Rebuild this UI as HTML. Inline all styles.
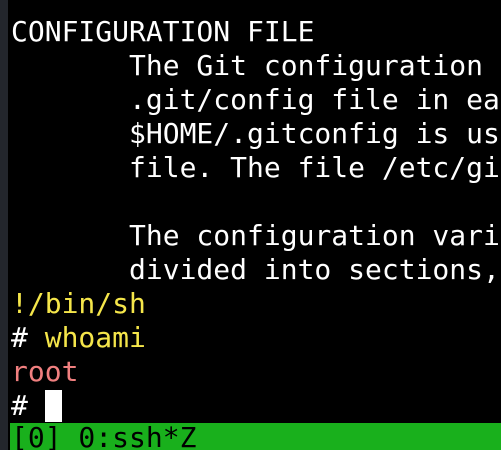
<!DOCTYPE html>
<html><head><style>
html,body{margin:0;padding:0;width:501px;height:450px;overflow:hidden;background:#000;position:relative;}
.strip{position:absolute;left:0;top:0;width:8px;height:450px;background:#23262c;}
.t{position:absolute;left:11px;top:15px;width:490px;height:408px;overflow:hidden;font-family:"DejaVu Sans Mono","Liberation Mono",monospace;font-size:28px;line-height:34px;color:#fff;white-space:pre;}
.y{color:#f5e64a;}
.r{color:#f07f7f;}
.cur{display:inline-block;width:17px;height:32px;background:#fff;vertical-align:-7px;}
.bar{position:absolute;left:10px;top:423px;width:491px;height:27px;background:#19b01c;}
.bt{position:absolute;left:11px;top:421px;font-family:"DejaVu Sans Mono","Liberation Mono",monospace;font-size:28px;line-height:34px;color:#000;white-space:pre;}
</style></head><body>
<div class="strip"></div>
<div class="t">CONFIGURATION FILE
       The Git configuration
       .git/config file in ea
       $HOME/.gitconfig is us
       file. The file /etc/gi

       The configuration vari
       divided into sections,
<span class="y">!/bin/sh</span>
# <span class="y">whoami</span>
<span class="r">root</span>
# <span class="cur"></span></div>
<div class="bar"></div>
<div class="bt">[0] 0:ssh*Z</div>
</body></html>
